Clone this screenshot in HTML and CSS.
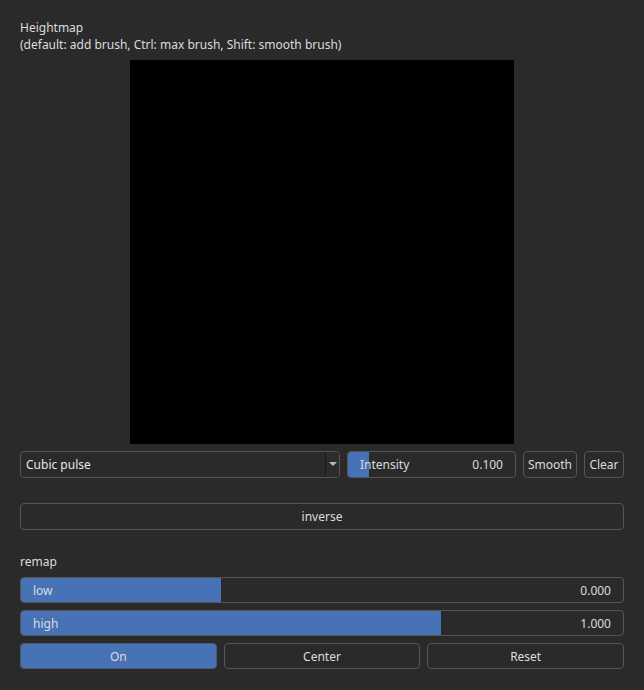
FILE: index.html
```html
<!DOCTYPE html>
<html>
<head>
<meta charset="utf-8">
<link rel="stylesheet" href="styles.css">
</head>
<body>
<div class="panel">
  <div class="title">Heightmap<br>(default: add brush, Ctrl: max brush, Shift: smooth brush)</div>
  <div class="canvas-wrap"><div class="canvas"></div></div>
  <div class="row brush-row">
    <div class="combo">
      <span class="combo-text">Cubic pulse</span>
      <span class="combo-arrow"><svg width="8" height="5" viewBox="0 0 8 5"><path d="M0 0 H8 L4 4 Z" fill="#b8b8b8"/></svg></span>
    </div>
    <div class="slider intensity">
      <div class="fill" style="width:12.4%"></div>
      <span class="s-label">Intensity</span>
      <span class="s-value">0.100</span>
    </div>
    <div class="btn small smooth">Smooth</div>
    <div class="btn small clear">Clear</div>
  </div>
  <div class="btn wide inverse">inverse</div>
  <div class="section-label">remap</div>
  <div class="stack">
    <div class="slider full">
      <div class="fill" style="width:33.3%"></div>
      <span class="s-label">low</span>
      <span class="s-value">0.000</span>
    </div>
    <div class="slider full">
      <div class="fill" style="width:69.8%"></div>
      <span class="s-label">high</span>
      <span class="s-value">1.000</span>
    </div>
    <div class="row three">
      <div class="btn on">On</div>
      <div class="btn">Center</div>
      <div class="btn">Reset</div>
    </div>
  </div>
</div>
</body>
</html>
```
FILE: styles.css
```css
html, body {
  margin: 0;
  padding: 0;
  background: #2a2a2a;
}
body {
  font-family: "Noto Sans", "Open Sans", sans-serif;
  font-size: 12px;
  color: #dcdcdc;
}
.panel {
  padding: 19px 20px 0 20px;
  display: flex;
  flex-direction: column;
}
.title {
  line-height: 17px;
}
.canvas-wrap {
  display: flex;
  justify-content: center;
  margin-top: 7px;
}
.canvas {
  width: 384px;
  height: 384px;
  background: #000;
}
.row {
  display: flex;
  gap: 7px;
}
.brush-row {
  margin-top: 7px;
  height: 27px;
}
.brush-row > * {
  flex-shrink: 0;
}
.combo {
  box-sizing: border-box;
  width: 320px;
  height: 27px;
  border: 1px solid #565656;
  border-radius: 4px;
  display: flex;
  align-items: center;
  padding-left: 5px;
  overflow: hidden;
}
.combo-text {
  flex: 1;
  color: #e6e6e6;
}
.combo-arrow {
  box-sizing: border-box;
  width: 15px;
  height: 27px;
  margin-right: -1px;
  border: 1px solid #1a1a1a;
  border-radius: 0 4px 4px 0;
  background: #2c2c2c;
  display: flex;
  align-items: center;
  justify-content: center;
}
.slider {
  position: relative;
  box-sizing: border-box;
  border: 1px solid #565656;
  border-radius: 4px;
  display: flex;
  align-items: center;
  justify-content: space-between;
  overflow: hidden;
  height: 26px;
}
.slider .fill {
  position: absolute;
  left: 0;
  top: 0;
  bottom: 0;
  background: #4872b6;
}
.s-label, .s-value {
  position: relative;
}
.s-label { padding-left: 12px; }
.s-value { padding-right: 12px; }
.intensity {
  width: 169px;
  height: 27px;
}
.btn {
  box-sizing: border-box;
  border: 1px solid #565656;
  border-radius: 4px;
  display: flex;
  align-items: center;
  justify-content: center;
  height: 26px;
}
.btn.small {
  height: 27px;
}
.smooth { width: 54px; }
.clear { width: 40px; }
.btn.wide {
  height: 27px;
}
.inverse {
  margin-top: 25px;
}
.section-label {
  margin-top: 23px;
  line-height: 17px;
}
.stack {
  margin-top: 7px;
  display: flex;
  flex-direction: column;
  gap: 7px;
}
.three .btn {
  flex: 1;
}
.btn.on {
  background: #4872b6;
  border-color: #4a5a70;
}
```
